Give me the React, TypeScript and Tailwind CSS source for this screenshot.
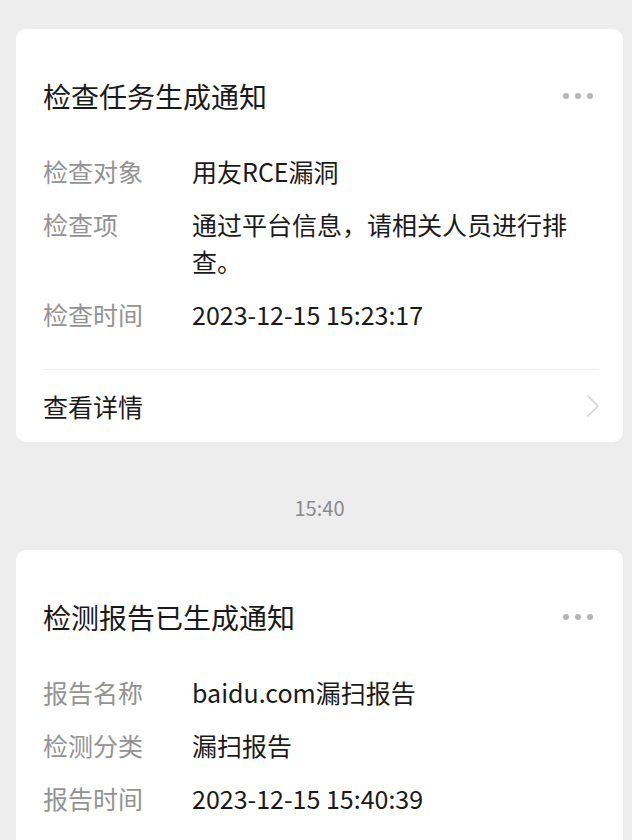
import React from "react";

interface Row {
  label: string;
  value: string;
}

interface NoticeCardProps {
  title: string;
  rows: Row[];
  showFooter?: boolean;
}

const Dots: React.FC = () => (
  <div className="flex items-center gap-[6px] mr-[6px]">
    <span className="block w-[6px] h-[6px] rounded-full bg-[#b5b5b5]" />
    <span className="block w-[6px] h-[6px] rounded-full bg-[#b5b5b5]" />
    <span className="block w-[6px] h-[6px] rounded-full bg-[#b5b5b5]" />
  </div>
);

const NoticeCard: React.FC<NoticeCardProps> = ({
  title,
  rows,
  showFooter = true,
}) => {
  return (
    <div
      className={`bg-white rounded-[10px] pl-[27px] pr-[24px] ${
        showFooter ? "" : "pb-[60px]"
      }`}
    >
      <div className="pt-[47px] flex items-center justify-between">
        <h2 className="text-[28px] leading-[40px] font-normal text-[#1a1a1a]">
          {title}
        </h2>
        <Dots />
      </div>
      <div className="mt-[37px] flex flex-col gap-[16px]">
        {rows.map((row) => (
          <div key={row.label} className="flex text-[25px] leading-[37px]">
            <span className="w-[149px] shrink-0 text-[#939393]">
              {row.label}
            </span>
            <span className="w-[390px] text-[#1a1a1a]">{row.value}</span>
          </div>
        ))}
      </div>
      {showFooter && (
        <div className="mt-[36px] border-t border-[#eeeeee] h-[73px] flex items-center justify-between">
          <span className="text-[25px] leading-[37px] text-[#1a1a1a]">
            查看详情
          </span>
          <svg
            width="14"
            height="24"
            viewBox="0 0 14 24"
            fill="none"
            className="mr-[-1px]"
          >
            <path
              d="M2 2 L12 12 L2 22"
              stroke="#d3d3d3"
              strokeWidth="1.6"
              strokeLinecap="round"
              strokeLinejoin="round"
            />
          </svg>
        </div>
      )}
    </div>
  );
};

const App: React.FC = () => {
  return (
    <div className="h-[840px] overflow-hidden bg-[#ededed] font-['Noto_Sans_CJK_SC','Noto_Sans',sans-serif]">
      <div className="pt-[29px] pl-[16px] pr-[9px]">
        <NoticeCard
          title="检查任务生成通知"
          rows={[
            { label: "检查对象", value: "用友RCE漏洞" },
            { label: "检查项", value: "通过平台信息，请相关人员进行排查。" },
            { label: "检查时间", value: "2023-12-15 15:23:17" },
          ]}
        />
        <div className="mt-[52px] mb-[28px] text-center text-[20px] leading-[28px] text-[#8a8a8a]">
          15:40
        </div>
        <NoticeCard
          title="检测报告已生成通知"
          showFooter={false}
          rows={[
            { label: "报告名称", value: "baidu.com漏扫报告" },
            { label: "检测分类", value: "漏扫报告" },
            { label: "报告时间", value: "2023-12-15 15:40:39" },
          ]}
        />
      </div>
    </div>
  );
};

export default App;
